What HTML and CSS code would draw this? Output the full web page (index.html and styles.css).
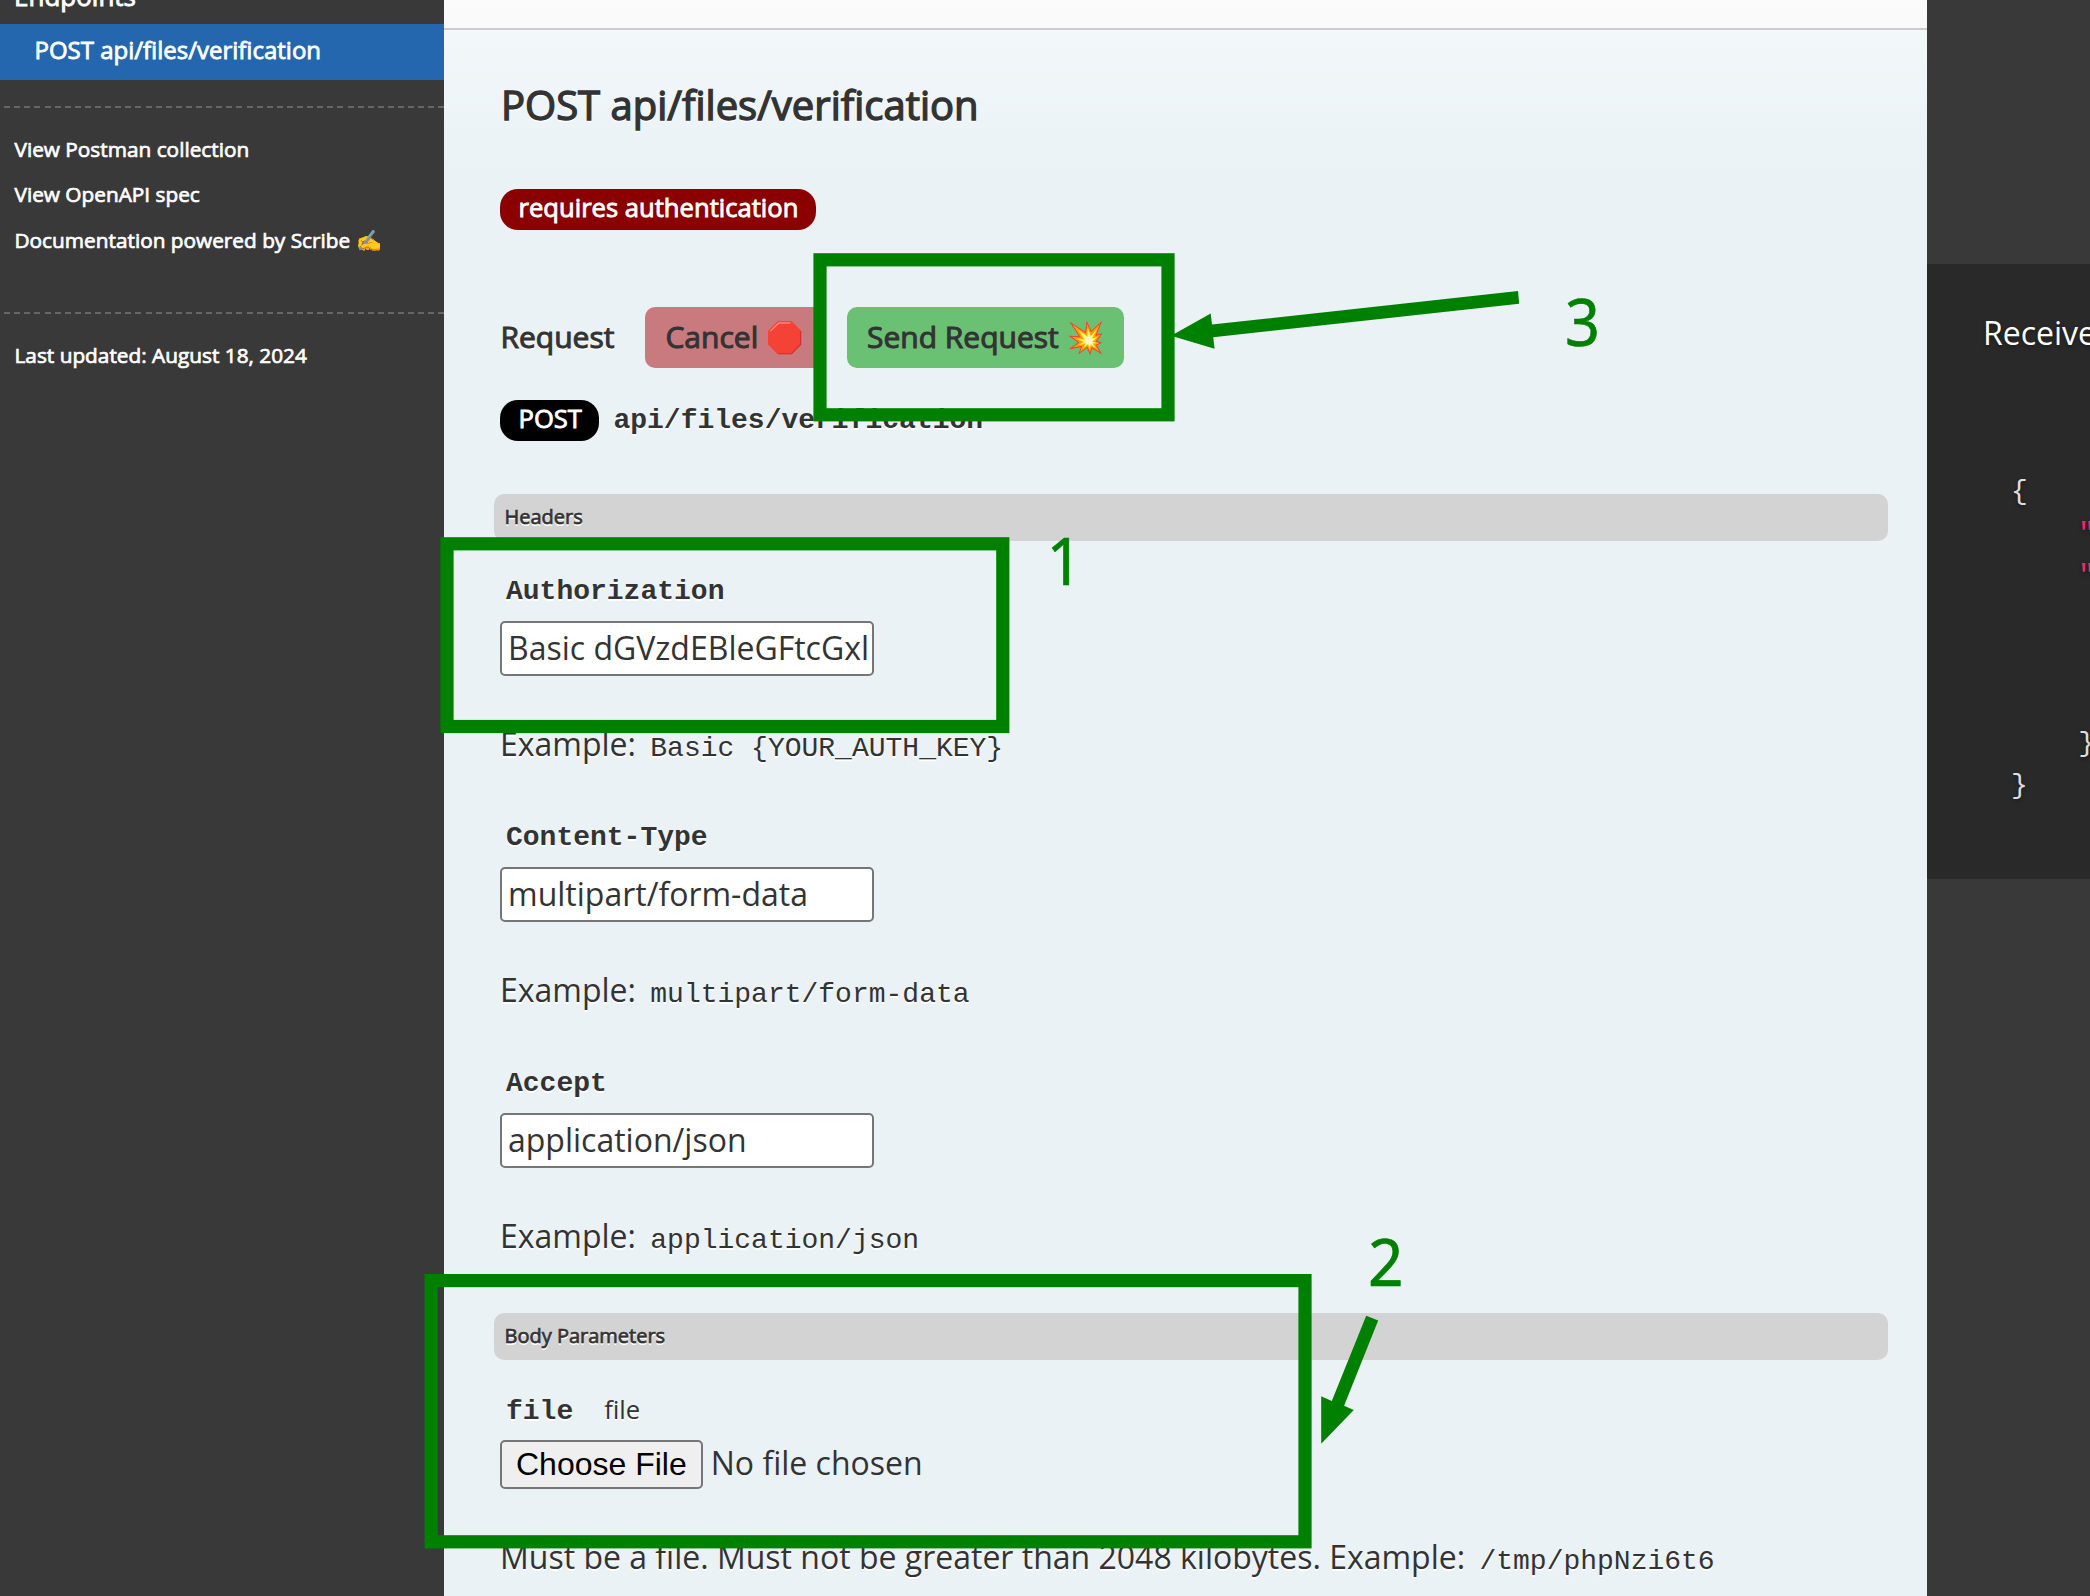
FILE: index.html
```html
<!DOCTYPE html>
<html lang="en">
<head>
<meta charset="utf-8">
<title>API Documentation</title>
<link rel="stylesheet" href="styles.css">
</head>
<body>
<div class="page">
  <aside class="sidebar">
    <div class="nav-group faux-bold">Endpoints</div>
    <a class="nav-item faux-bold">POST api/files/verification</a>
    <ul class="footer-links faux-bold">
      <li>View Postman collection</li>
      <li>View OpenAPI spec</li>
      <li>Documentation powered by Scribe ✍</li>
    </ul>
    <ul class="footer-links updated faux-bold">
      <li>Last updated: August 18, 2024</li>
    </ul>
  </aside>

  <main class="content">
    <div class="intro-end"></div>
    <h2 class="faux-bold">POST api/files/verification</h2>
    <div class="body">
      <span class="badge badge-auth faux-bold">requires authentication</span>
      <div class="request-row">
        <h3 class="faux-bold">Request</h3>
        <button class="btn btn-cancel faux-bold">Cancel 🛑</button>
        <button class="btn btn-send faux-bold">Send Request 💥</button>
      </div>
      <div class="route">
        <span class="badge badge-post faux-bold">POST</span>
        <code class="strong">api/files/verification</code>
      </div>

      <h4 class="faux-bold">Headers</h4>
      <div class="field">
        <div class="label"><code class="strong">Authorization</code></div>
        <input class="text" type="text" value="Basic dGVzdEBleGFtcGxlLmNvbQ==">
        <p>Example: <code>Basic {YOUR_AUTH_KEY}</code></p>
      </div>
      <div class="field">
        <div class="label"><code class="strong">Content-Type</code></div>
        <input class="text" type="text" value="multipart/form-data">
        <p>Example: <code>multipart/form-data</code></p>
      </div>
      <div class="field">
        <div class="label"><code class="strong">Accept</code></div>
        <input class="text" type="text" value="application/json">
        <p>Example: <code>application/json</code></p>
      </div>

      <h4 class="faux-bold params">Body Parameters</h4>
      <div class="field">
        <div class="label typed"><code class="strong">file</code><small>file</small></div>
        <div class="file-input"><button class="choose">Choose File</button><span>No file chosen</span></div>
        <p>Must be a file. Must not be greater than 2048 kilobytes. Example: <code>/tmp/phpNzi6t6</code></p>
      </div>
    </div>
  </main>

  <section class="examples">
    <div class="response">
      <p class="response-title">Received response:</p>
<pre>{
    <b>"</b>
    <b>"</b>



    }
}</pre>
    </div>
  </section>
</div>

<svg class="annotations" width="2090" height="1596" viewBox="0 0 2090 1596">
  <g fill="none" stroke="#008000" stroke-width="13.2">
    <rect x="820" y="259.8" width="348" height="155"/>
    <rect x="447" y="543.8" width="555.8" height="182.7"/>
    <rect x="431.2" y="1280.6" width="873.8" height="261.2"/>
  </g>
  <g fill="#008000">
    <path d="M1171 335.8L1210.7 313.5L1212 324.6L1518 291L1519.2 303.7L1213.2 337.2L1214.6 348.7Z"/>
    <path d="M1321.2 1443.7V1396.3L1331.8 1401L1366.2 1315.7L1378.2 1320.5L1344.1 1405.7L1353.8 1410Z"/>
  </g>
  <g class="step">
    <text x="1046.5" y="585.4" textLength="36" lengthAdjust="spacingAndGlyphs">1</text>
    <text x="1368" y="1286.4" textLength="35.5" lengthAdjust="spacingAndGlyphs">2</text>
    <text x="1565" y="346.4" textLength="35" lengthAdjust="spacingAndGlyphs">3</text>
  </g>
</svg>
</body>
</html>
```
FILE: styles.css
```css
* { box-sizing: border-box; }

body {
  margin: 0;
  height: 1596px;
  overflow: hidden;
  font: 32px/50px "Open Sans", sans-serif;
  color: #333;
  background: #393939;
}

/* Thickens regular-weight glyphs while keeping their advance widths */
.faux-bold {
  font-weight: 400;
  -webkit-text-stroke: 0.034em currentColor;
}

.page {
  display: grid;
  grid-template-columns: 444px 1483px 1fr;
  height: 1596px;
  overflow: hidden;
}

/* Sidebar */
.sidebar { color: #fff; min-width: 0; }

.nav-group {
  margin-top: -22px;
  padding-left: 14px;
  font-size: 26px;
  line-height: 36px;
}

.nav-item {
  display: block;
  margin-top: 10px;
  padding: 0 0 5px 34.5px;
  font-size: 24px;
  line-height: 51px;
  background: #2467af;
}

.footer-links {
  list-style: none;
  margin: 26px 0 0;
  padding: 21px 0 0 14.5px;
  background: repeating-linear-gradient(to right, transparent 0 4.1px, #666 4.1px 10.1px) 0 0 / 100% 2px no-repeat;
  font-size: 20.8px;
  line-height: 45.3px;
}

.footer-links.updated { margin-top: 49px; }

/* Main column */
.content {
  background: #eaf2f6;
  overflow: hidden;
  text-shadow: 0 2px 0 #fff;
}

.intro-end {
  height: 28px;
  background: linear-gradient(to bottom, #fbfbfb, #f9f9f9);
}

h2 {
  margin: 0;
  padding: 48px 57px 44px;
  border-top: 2px solid #ccc;
  font-size: 40px;
  line-height: 54px;
  background: linear-gradient(to bottom, rgba(255, 255, 255, .4), rgba(255, 255, 255, 0));
}

.body {
  display: flex;
  flex-direction: column;
  align-items: flex-start;
  padding: 13px 39px 0 56px;
}

.badge {
  height: 41px;
  padding: 0 17.5px 0 18.5px;
  border-radius: 18px;
  color: #fff;
  font-size: 25.6px;
  line-height: 37px;
  text-shadow: none;
  white-space: nowrap;
}

.badge-auth { background: #8b0000; }
.badge-post { background: #000; }

.request-row {
  display: flex;
  align-items: flex-start;
  margin-top: 77px;
}

h3 { margin: 0 30.5px 0 0.5px; font-size: 30px; line-height: 59px; }

.btn {
  height: 61px;
  margin-right: 23px;
  padding: 0 20.5px 2px;
  border: 0;
  border-radius: 10px;
  color: #333;
  font-family: inherit;
  font-size: 30px;
  line-height: 59px;
}

.btn-cancel { background: #c97a7e; }
.btn-send { background: #6ac174; }

.route {
  display: flex;
  gap: 8px;
  margin-top: 32px;
  line-height: 41px;
}

code {
  padding: 0 6px;
  font-family: "Liberation Mono", monospace;
  font-size: 28px;
}

.strong { font-weight: 700; }

h4 {
  align-self: stretch;
  height: 47px;
  margin: 53px 0 31px -6px;
  padding: 0 10.5px;
  border-radius: 10px;
  font-size: 20px;
  line-height: 46px;
  background: #d3d3d3;
}

h4.params { margin-top: 3px; }

.field { margin-bottom: 49px; }

.label {
  display: flex;
  align-items: baseline;
  height: 40px;
  margin-bottom: 9px;
  line-height: 40px;
}

.label.typed { line-height: 37px; }
.label small { margin-left: 25px; font-size: 25.6px; }

.text {
  display: block;
  width: 374px;
  height: 55px;
  padding: 1px 4px 3px 6px;
  border: 2px solid #767676;
  border-radius: 5px;
  color: #333;
  font: 32px "Open Sans", sans-serif;
  background: #fff;
}

.field p { height: 50px; margin: 43px 0 0; white-space: nowrap; }

.file-input {
  display: flex;
  gap: 8px;
  height: 49px;
  line-height: 45px;
  text-shadow: none;
}

.choose {
  height: 49px;
  padding: 0 14px;
  border: 2px solid #767676;
  border-radius: 5px;
  color: #000;
  font: 32px "Liberation Sans", sans-serif;
  background: #efefef;
}

/* Example column */
.examples { padding-top: 264px; overflow: hidden; min-width: 0; }

.response {
  height: 615px;
  padding: 44px 0 0 56px;
  color: #fff;
  background: #292929;
  text-shadow: 0 2px 4px rgba(0, 0, 0, .4);
}

.response-title { margin: 0; white-space: nowrap; }

pre {
  margin: 113px 0 0 28px;
  color: #ddd;
  font: 28px/42px "Liberation Mono", monospace;
}

pre b { color: #f92672; font-weight: 400; }

/* Tutorial marks drawn over the page */
.annotations { position: absolute; top: 0; left: 0; }
.step {
  fill: #008000;
  stroke: #008000;
  stroke-width: 0.6;
  font: 66px "Noto Sans", sans-serif;
}
```
